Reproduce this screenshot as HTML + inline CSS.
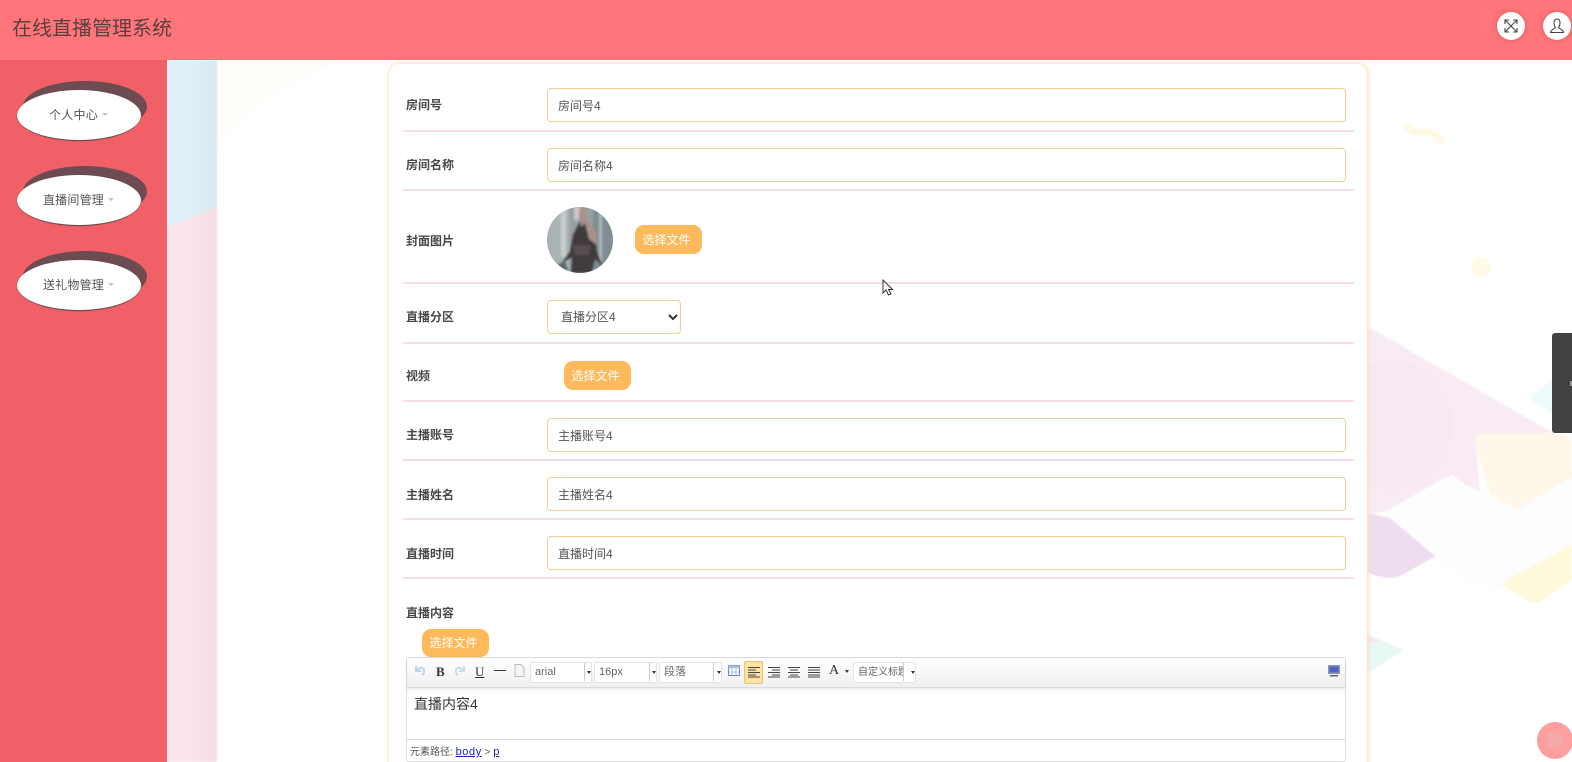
<!DOCTYPE html>
<html lang="zh">
<head>
<meta charset="utf-8">
<title>在线直播管理系统</title>
<style>
*{box-sizing:border-box;margin:0;padding:0}
html,body{width:1572px;height:762px;overflow:hidden;background:#fff}
body{position:relative;font-family:"Liberation Sans","Noto Sans CJK SC",sans-serif;color:#333;filter:blur(.3px)}
.a{position:absolute}
#header{left:0;top:0;width:1572px;height:60px;background:#ff7579}
#title{left:12px;top:14px;font-size:20px;line-height:30px;color:#5c3d40;white-space:nowrap}
.rb{width:28px;height:28px;border-radius:50%;background:#fff;top:12px;box-shadow:0 0 4px rgba(90,40,40,.3)}
#side{left:0;top:60px;width:167px;height:702px;background:#f06066}
.oval{left:17px;width:124px;height:51px;border-radius:50%;background:#fff;border-bottom:1px solid #6b4a50;box-shadow:6px -9px 0 0 #6c4b51,0 0 1px #5a4043;font-size:12px;letter-spacing:.2px;line-height:50px;text-align:center;color:#555;padding-right:1px}
.oval i{display:inline-block;width:0;height:0;border:3.500px solid transparent;border-top-color:#c3c3c3;border-bottom:0;margin-left:4px;vertical-align:3px}
#card{left:389px;top:64px;width:978px;height:710px;background:#fff;border-radius:10px;box-shadow:1px 0 3px 1px #fbe3bd,-1px 0 2px #fff0dd}
.div{left:403px;width:951px;height:1.500px;background:#f6dde2;border-radius:2px}
.lb{left:406px;font-size:12px;font-weight:700;line-height:16px;color:#484848;white-space:nowrap}
.ip{left:547px;width:799px;height:34px;border:1.500px solid #efcf94;border-radius:4px;background:#fff;font-size:12px;line-height:33px;padding-top:1px;color:#555;padding-left:10px;white-space:nowrap}
.btn{width:67px;height:29px;border-radius:9px;background:#fdba5c;color:#fff;font-size:12px;line-height:30px;text-align:center;padding-right:4px}
#sel{left:547px;top:300px;width:134px;height:34px;border:1.500px solid #efcf94;border-radius:4px;font-size:12px;line-height:32px;color:#555;padding-left:13px;background:#fff}
#ed{left:406px;top:657px;width:940px;height:105px;border:1px solid #dcdcdc;border-radius:3px;background:#fff}
#tb{left:0;top:0;width:938px;height:30px;background:linear-gradient(#fff,#f0f0f2);border-bottom:1px solid #dcdcdc;box-shadow:0 1px 3px rgba(0,0,0,.1)}
.cb{top:662px;height:21px;background:#fff;border:1px solid #e4e4e4;border-radius:2px;font-size:11px;line-height:19px;color:#666;padding-left:4px;white-space:nowrap}
.cb b{position:absolute;right:-7px;top:8px;border:2.500px solid transparent;border-top:3.500px solid #333;border-bottom:0}
.cb u{position:absolute;right:0;top:0;height:18px;border-left:1px solid #ccc}
.ti{top:662px;font-family:"Liberation Serif",serif;font-weight:700;font-size:13px;line-height:20px;color:#333}
svg{display:block}
</style>
</head>
<body>
<svg class="a" style="left:0;top:60px;filter:blur(.7px)" width="1572" height="702" viewBox="0 60 1572 702">
<defs><linearGradient id="sh" x1="0" x2="1" y1="0" y2="0"><stop offset="0" stop-color="#8a8a9a" stop-opacity="0"/><stop offset="1" stop-color="#8a8a9a" stop-opacity=".07"/></linearGradient></defs>
<rect x="167" y="60" width="50" height="702" fill="#fce4ea"/>
<polygon points="167,60 217,60 217,208 167,227" fill="#dff0f8"/>
<rect x="187" y="60" width="30" height="702" fill="url(#sh)"/>
<path d="M217 60H345C290 80 245 105 217 147Z" fill="#fffdf8"/>
<polygon points="1367,326 1552,432 1476,440 1480,495 1452,475 1390,510 1367,515" fill="#f9ebf3"/>
<ellipse cx="1392" cy="425" rx="60" ry="65" fill="#f6e6f1" opacity=".5"/>
<path d="M1367 513 1390 518 1443 552 1402 575Q1388 582 1367 572Z" fill="#eedcf0"/>
<path d="M1482 433H1562Q1572 436 1572 445V478L1517 510 1490 494Q1482 470 1476 445Q1474 436 1482 433Z" fill="#fff8ea"/>
<path d="M1392 508 1448 476 1517 510 1572 480V548L1540 590 1470 585 1392 520Q1382 514 1392 508Z" fill="#fefdfe"/>
<path d="M1500 584 1572 544V580L1542 601Q1536 605 1528 601Z" fill="#fff9dc"/>
<polygon points="1529,398 1555,377 1555,415" fill="#ecfafa"/>
<polygon points="1367,634 1404,650 1367,674" fill="#e8f8f5"/>
<polygon points="1367,634 1380,642 1367,642" fill="#fbe4e6"/>
<path d="M1408 127C1414 135 1428 130 1436 134L1441 140" stroke="#fff8e2" stroke-width="7" fill="none" stroke-linecap="round"/>
<circle cx="1481" cy="267" r="10" fill="#fffae4"/>
</svg>

<div class="a" id="header"></div>
<div class="a" id="title">在线直播管理系统</div>
<div class="a rb" style="left:1497px">
<svg width="28" height="28" viewBox="0 0 28 28" fill="none" stroke="#444" stroke-width="1.100"><path d="M8.500 8.500 19.500 19.500M19.500 8.500 8.500 19.500M8 12V8H12M16 8H20V12M8 16V20H12M20 16V20H16"/></svg>
</div>
<div class="a rb" style="left:1543px">
<svg width="28" height="28" viewBox="0 0 28 28" fill="none" stroke="#444" stroke-width="1.100"><path d="M14 7C11.500 7 11 9 11 11C11 13 12 14.500 12.400 15.500C11.500 17 8 17.500 7.500 20.500H20.500C20 17.500 16.500 17 15.600 15.500C16 14.500 17 13 17 11C17 9 16.500 7 14 7Z"/></svg>
</div>

<div class="a" id="side"></div>
<div class="a oval" style="top:90px">个人中心<i></i></div>
<div class="a oval" style="top:175px">直播间管理<i></i></div>
<div class="a oval" style="top:260px">送礼物管理<i></i></div>

<div class="a" id="card"></div>
<div class="a div" style="top:130px"></div>
<div class="a div" style="top:189px"></div>
<div class="a div" style="top:282px"></div>
<div class="a div" style="top:342px"></div>
<div class="a div" style="top:400px"></div>
<div class="a div" style="top:459px"></div>
<div class="a div" style="top:518px"></div>
<div class="a div" style="top:577px"></div>

<div class="a lb" style="top:97px">房间号</div>
<div class="a ip" style="top:88px">房间号4</div>
<div class="a lb" style="top:157px">房间名称</div>
<div class="a ip" style="top:148px">房间名称4</div>
<div class="a lb" style="top:233px">封面图片</div>
<svg class="a" style="left:547px;top:207px" width="66" height="66" viewBox="0 0 66 66">
<defs><clipPath id="c"><circle cx="33" cy="33" r="33"/></clipPath><filter id="bl"><feGaussianBlur stdDeviation="1"/></filter></defs>
<g clip-path="url(#c)"><rect width="66" height="66" fill="#97a1a5"/>
<g filter="url(#bl)">
<rect x="0" y="0" width="22" height="66" fill="#aab3b4"/>
<rect x="46" y="0" width="20" height="66" fill="#7f8d93"/>
<rect x="14" y="0" width="5" height="50" fill="#c8cfcf"/>
<rect x="52" y="5" width="3" height="50" fill="#aeb8bb"/>
<path d="M33 14 41 18 48 28 50 44 56 60 48 52 45 66H24L25 50 13 58 23 44 26 28Z" fill="#3f3a3d"/>
<path d="M31 0H38L41 14 49 24 50 38 42 32 38 16 34 20Z" fill="#a8928b"/>
<path d="M27 0H33L31 14 27 12Z" fill="#cfc9c6"/>
<path d="M0 62 18 54 22 66H0Z" fill="#5f696e"/>
<path d="M26 38H44L42 48H28Z" fill="#5a4e4f"/>
</g></g></svg>
<div class="a btn" style="left:635px;top:225px">选择文件</div>
<div class="a lb" style="top:309px">直播分区</div>
<div class="a" id="sel">直播分区4
<svg class="a" style="left:120px;top:13px" width="10" height="7" viewBox="0 0 10 7"><path d="M1 1 5 5 9 1" fill="none" stroke="#333" stroke-width="2"/></svg>
</div>
<div class="a lb" style="top:368px">视频</div>
<div class="a btn" style="left:564px;top:361px">选择文件</div>
<div class="a lb" style="top:427px">主播账号</div>
<div class="a ip" style="top:418px">主播账号4</div>
<div class="a lb" style="top:487px">主播姓名</div>
<div class="a ip" style="top:477px">主播姓名4</div>
<div class="a lb" style="top:546px">直播时间</div>
<div class="a ip" style="top:536px">直播时间4</div>
<div class="a lb" style="top:605px">直播内容</div>
<div class="a btn" style="left:422px;top:629px;height:28px;line-height:28px">选择文件</div>

<div class="a" id="ed">
  <div class="a" id="tb"></div>
  <div class="a" style="left:7px;top:37px;font-size:14px;line-height:19px;color:#333">直播内容4</div>
  <div class="a" style="left:0;top:81px;width:938px;height:1px;background:#dcdcdc"></div>
  <div class="a" style="left:3px;top:87px;font-size:10px;line-height:15px;color:#555;white-space:nowrap">元素路径: <span style="color:#2222bb;text-decoration:underline;font-size:11px;letter-spacing:.6px">body</span> &gt; <span style="color:#2222bb;text-decoration:underline;font-size:11px">p</span></div>
</div>
<svg class="a" style="left:414px;top:663px" width="12" height="14" viewBox="0 0 12 14"><path d="M2 3V8H7M3 7.500C5 4 9 4 10 7 10.500 9 9.500 11 8 12" fill="none" stroke="#bcd3ea" stroke-width="2"/></svg>
<div class="a ti" style="left:436px">B</div>
<svg class="a" style="left:454px;top:663px" width="12" height="14" viewBox="0 0 12 14"><path d="M10 3V8H5M9 7.500C7 4 3 4 2 7 1.500 9 2.500 11 4 12" fill="none" stroke="#c8dbe8" stroke-width="2"/></svg>
<div class="a ti" style="left:475px;text-decoration:underline;font-weight:400">U</div>
<div class="a" style="left:494px;top:670px;width:12px;height:1px;background:#333"></div>
<svg class="a" style="left:514px;top:664px" width="11" height="13" viewBox="0 0 11 13"><path d="M1 .5H7L10 3.500V12.500H1Z" fill="#f6f6f6" stroke="#bbb"/></svg>
<div class="a cb" style="left:530px;width:62px">arial<u style="right:6px"></u><b style="right:0"></b></div>
<div class="a cb" style="left:594px;width:63px">16px<u style="right:6px"></u><b style="right:0"></b></div>
<div class="a cb" style="left:659px;width:63px">段落<u style="right:7px"></u><b style="right:0"></b></div>
<svg class="a" style="left:728px;top:665px" width="12" height="12" viewBox="0 0 12 12"><rect x=".5" y=".5" width="11" height="10" fill="#fff" stroke="#6a8cba"/><rect x=".5" y=".5" width="11" height="3" fill="#a5c0e0"/><path d="M4 4V10M8 4V10M1 7H11" stroke="#a9bfd8"/></svg>
<div class="a" style="left:744px;top:661px;width:19px;height:23px;background:#fde3a0;border:1px solid #eec46a;border-radius:2px"></div>
<svg class="a" style="left:748px;top:666px" width="74" height="12" viewBox="0 0 74 12" stroke="#444" stroke-width="1">
<path d="M0 1.500H12M0 4H8M0 6.500H12M0 9H8M0 11H12"/>
<path d="M20 1.500H32M24 4H32M20 6.500H32M24 9H32M20 11H32"/>
<path d="M40 1.500H52M42 4H50M40 6.500H52M42 9H50M40 11H52"/>
<path d="M60 1.500H72M60 4H72M60 6.500H72M60 9H72M60 11H72"/>
</svg>
<div class="a ti" style="left:829px;top:661px;font-size:14px;font-weight:400">A</div>
<div class="a" style="left:845px;top:670px;border:2.500px solid transparent;border-top:3.500px solid #333;border-bottom:0"></div>
<div class="a cb" style="left:853px;width:63px;font-size:10px;overflow:hidden">自定义标题<u style="right:6px;background:#fff;width:6px;border-right:0"></u><b style="right:0"></b></div>
<svg class="a" style="left:1328px;top:665px" width="12" height="12" viewBox="0 0 12 12"><rect x="0" y="0" width="12" height="9" fill="#8d98aa"/><rect x="1.500" y="1.500" width="9" height="6" fill="#4d63c8"/><rect x="2" y="10" width="8" height="1.500" fill="#53617a"/></svg>

<svg class="a" style="left:882px;top:279px" width="12" height="18" viewBox="0 0 12 18"><path d="M1 1V14L4 11 6.500 16 9 15 6.500 10.500H10.500Z" fill="#fff" stroke="#333" stroke-width="1"/></svg>

<div class="a" style="left:1552px;top:333px;width:20px;height:100px;background:#424242;border-radius:3px 0 0 3px"></div>
<div class="a" style="left:1570px;top:381px;width:2px;height:5px;background:#999"></div>
<div class="a" style="left:1537px;top:722px;width:36px;height:37px;border-radius:50%;background:#fd9e9f"></div>
<div class="a" style="left:1547px;top:731px;width:16px;height:18px;border-radius:50%;background:#f5aaaa"></div>
</body>
</html>
